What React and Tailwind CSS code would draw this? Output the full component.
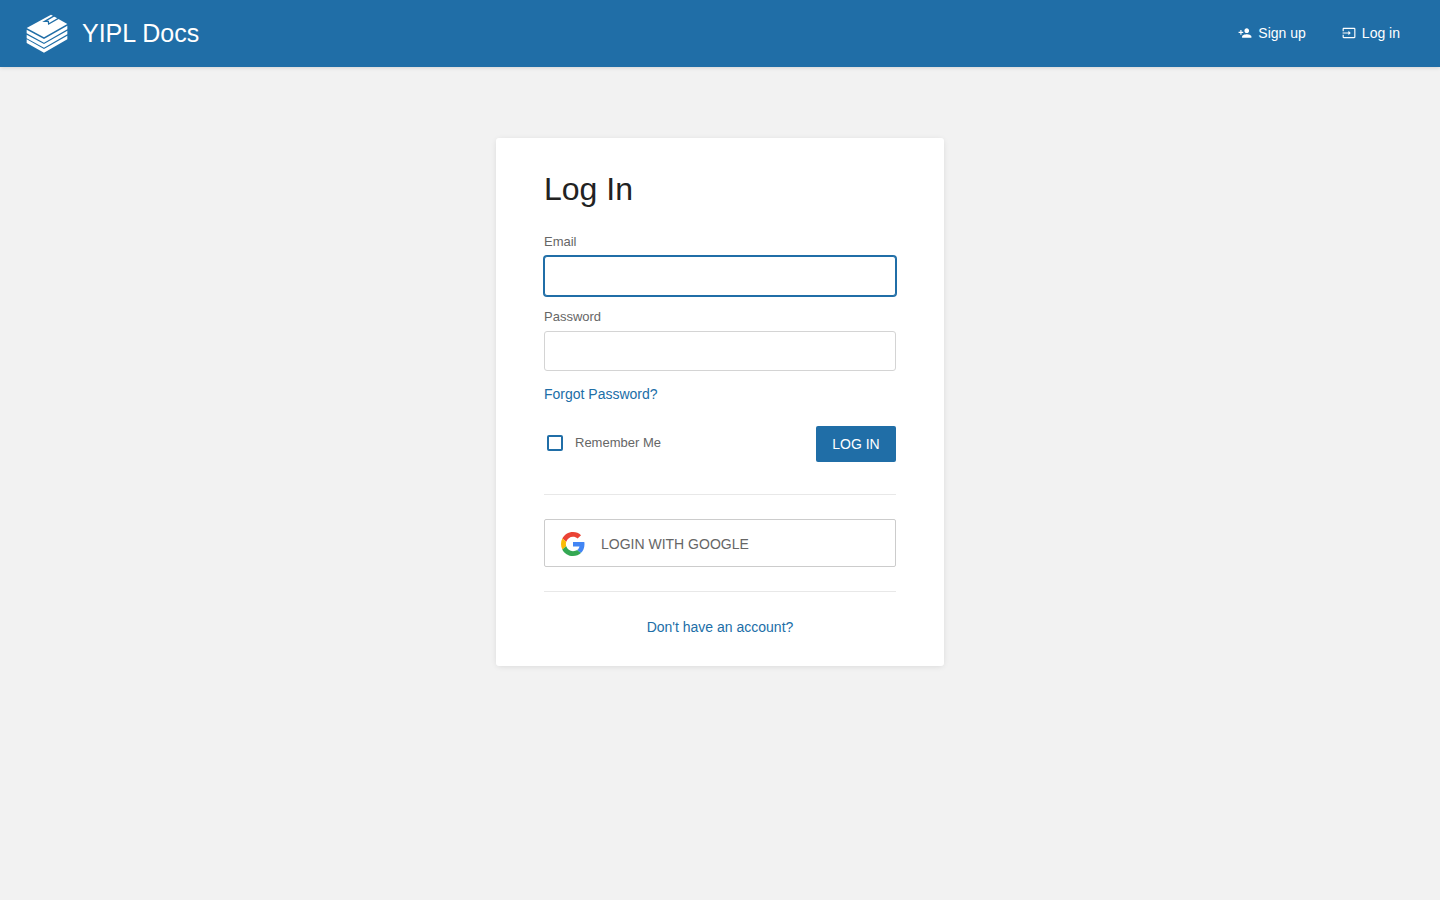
import { MdInput, MdPersonAdd } from 'react-icons/md';

function Logo() {
  return (
    <svg viewBox="0 0 126 129" className="h-[43px] w-[42px]" fill="#fff" aria-hidden="true">
      <path d="M2 48 L75 8 L124 36 L54 76 Z" />
      <path d="M2 53 L54 81 L124 41 L124 52 L54 92 L2 64 Z" />
      <path d="M2 68 L54 96 L124 56 L124 67 L54 107 L2 79 Z" />
      <path d="M2 82 L54 111 L124 71 L124 82 L54 122 L2 93 Z" />
      <path d="M87 10 L56 28 L67 28 L68 36 L101 17" fill="none" stroke="#206ea7" strokeWidth="4" />
    </svg>
  );
}

function GoogleIcon() {
  return (
    <svg viewBox="0 0 48 48" className="size-6 shrink-0" aria-hidden="true">
      <path fill="#EA4335" d="M24 9.5c3.54 0 6.71 1.22 9.21 3.6l6.85-6.85C35.9 2.38 30.47 0 24 0 14.62 0 6.51 5.38 2.56 13.22l7.98 6.19C12.43 13.72 17.74 9.5 24 9.5z" />
      <path fill="#4285F4" d="M46.98 24.55c0-1.57-.15-3.09-.38-4.55H24v9.02h12.94c-.58 2.96-2.26 5.48-4.78 7.18l7.73 6c4.51-4.18 7.09-10.36 7.09-17.65z" />
      <path fill="#FBBC05" d="M10.53 28.59c-.48-1.45-.76-2.99-.76-4.59s.27-3.14.76-4.59l-7.98-6.19C.92 16.46 0 20.12 0 24c0 3.88.92 7.54 2.56 10.78l7.97-6.19z" />
      <path fill="#34A853" d="M24 48c6.48 0 11.93-2.13 15.89-5.81l-7.73-6c-2.15 1.45-4.92 2.3-8.16 2.3-6.26 0-11.57-4.22-13.47-9.91l-7.98 6.19C6.51 42.62 14.62 48 24 48z" />
    </svg>
  );
}

function Field({ id, label, type, ...rest }) {
  return (
    <div>
      <label htmlFor={id} className="block pb-1 text-[13px] leading-5 text-[#666]">{label}</label>
      <input
        id={id}
        name={id}
        type={type}
        className="block h-10 w-full rounded-[3px] border border-[#d4d4d4] bg-white px-2 text-sm text-[#222] outline-none focus:border-[#206ea7] focus:ring-1 focus:ring-[#206ea7]"
        {...rest}
      />
    </div>
  );
}

export default function App() {
  return (
    <div className="min-h-screen bg-[#f2f2f2] font-['Liberation_Sans',Arial,sans-serif] text-sm text-[#444]">
      <header className="flex items-center justify-between bg-[#206ea7] pr-10 pl-[26px] text-white shadow-[0_1px_4px_rgba(0,0,0,0.12)]">
        <a href="#home" className="flex items-center gap-[14px] py-3">
          <Logo />
          <span className="pb-0.5 text-[25px] leading-8">YIPL Docs</span>
        </a>
        <nav className="flex items-center gap-9 pb-0.5">
          <a href="#register" className="flex items-center gap-[6px]">
            <MdPersonAdd className="size-[14px]" aria-hidden="true" />
            Sign up
          </a>
          <a href="#login" className="flex items-center gap-[6px]">
            <MdInput className="size-[14px]" aria-hidden="true" />
            Log in
          </a>
        </nav>
      </header>

      <main className="px-4 pt-[71px] pb-12">
        <section className="mx-auto max-w-md rounded-[3px] bg-white px-12 pt-8 pb-[29px] shadow-[0_1px_6px_-1px_rgba(0,0,0,0.12)]">
          <h1 className="text-[32px] leading-[38px] text-[#222]">Log In</h1>

          <form className="pt-6" onSubmit={(event) => event.preventDefault()}>
            <div className="flex flex-col gap-[11px]">
              <Field id="email" label="Email" type="email" autoFocus />
              <Field id="password" label="Password" type="password" />
            </div>
            <a href="#forgot" className="mt-[13px] block w-fit text-[#206ea7]">Forgot Password?</a>

            <div className="mt-[22px] flex items-center justify-between">
              <label htmlFor="remember" className="flex items-center gap-3 pb-0.5 pl-[3px] text-[13px] text-[#666]">
                <input
                  id="remember"
                  type="checkbox"
                  className="size-4 appearance-none rounded-xs border-2 border-[#206ea7] checked:bg-[#206ea7]"
                />
                Remember Me
              </label>
              <button type="submit" className="h-9 w-20 rounded-xs bg-[#206ea7] text-sm text-white">LOG IN</button>
            </div>
          </form>

          <hr className="mt-8 border-[#e8e8e8]" />
          <button
            type="button"
            className="my-6 flex h-12 w-full items-center gap-4 rounded-xs border border-[#ccc] px-4 pt-0.5 text-sm text-[#666]"
          >
            <GoogleIcon />
            <span>LOGIN WITH GOOGLE</span>
          </button>
          <hr className="border-[#e8e8e8]" />

          <p className="pt-[25px] text-center">
            <a href="#register" className="text-[#206ea7]">Don't have an account?</a>
          </p>
        </section>
      </main>
    </div>
  );
}
